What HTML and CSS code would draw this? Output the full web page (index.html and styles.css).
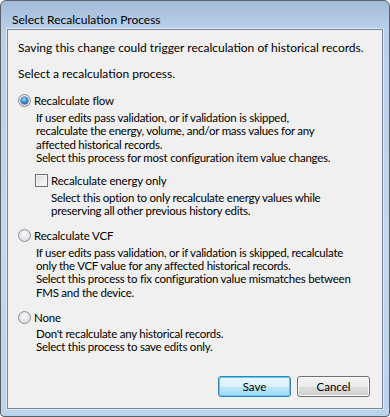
FILE: index.html
```html
<!DOCTYPE html>
<html lang="en">
<head>
    <meta charset="UTF-8">
    <title>Select Recalculation Process</title>
    <link rel="stylesheet" href="styles.css">
</head>
<body>
    <div class="window">
        <div class="titlebar">Select Recalculation Process</div>
        <div class="client">
            <p class="intro">Saving this change could trigger recalculation of historical records.</p>
            <p class="prompt">Select a recalculation process.</p>

            <div class="option">
                <div class="choice"><span class="radio checked"></span>Recalculate flow</div>
                <div class="desc">
                    If user edits pass validation, or if validation is skipped,<br>
                    recalculate the energy, volume, and/or mass values for any<br>
                    affected historical records.<br>
                    Select this process for most configuration item value changes.
                </div>
                <div class="sub-option">
                    <div class="choice"><span class="check"></span>Recalculate energy only</div>
                    <div class="desc sub-desc">
                        Select this option to only recalculate energy values while<br>
                        preserving all other previous history edits.
                    </div>
                </div>
            </div>

            <div class="option">
                <div class="choice"><span class="radio"></span>Recalculate VCF</div>
                <div class="desc">
                    If user edits pass validation, or if validation is skipped, recalculate<br>
                    only the VCF value for any affected historical records.<br>
                    Select this process to fix configuration value mismatches between<br>
                    FMS and the device.
                </div>
            </div>

            <div class="option last">
                <div class="choice"><span class="radio"></span>None</div>
                <div class="desc">
                    Don't recalculate any historical records.<br>
                    Select this process to save edits only.
                </div>
            </div>

            <div class="buttons">
                <button class="btn default">Save</button>
                <button class="btn">Cancel</button>
            </div>
        </div>
    </div>
</body>
</html>
```

FILE: styles.css
```css
body {
    margin: 0;
    font-family: Lato, "Open Sans", sans-serif;
    font-size: 12px;
    color: #000;
    background: #fff;
}
.window {
    box-sizing: border-box;
    width: 390px;
    height: 417px;
    display: flex;
    flex-direction: column;
    border: 1px solid #5b5f66;
    border-radius: 6px 6px 4px 4px;
    background: linear-gradient(to bottom, #a3bbd8 0px, #bad0e9 28px, #c3d7ed 60%, #bcd3ec 100%);
    padding: 0 6px 7px 6px;
}
.titlebar {
    box-sizing: border-box;
    height: 28px;
    padding: 12px 0 0 5px;
    line-height: 14px;
    white-space: nowrap;
}
.client {
    flex: 1;
    display: flex;
    flex-direction: column;
    background: #f0f0f0;
    border: 1px solid #7a8593;
    box-shadow: 0 0 0 1px #dde9f6;
    padding: 10px 12px 11px 10px;
    white-space: nowrap;
}
p {
    margin: 0;
    line-height: 15px;
}
.intro {
    margin-bottom: 11px;
}
.prompt {
    margin-bottom: 12px;
}
.option {
    margin-bottom: 10px;
}
.option.last {
    margin-top: 1px;
}
.choice {
    display: flex;
    align-items: center;
    height: 15px;
    line-height: 15px;
    font-size: 11.5px;
    letter-spacing: -0.15px;
}
.radio {
    box-sizing: border-box;
    width: 13px;
    height: 13px;
    margin-right: 3px;
    border-radius: 50%;
    border: 1px solid #8b9097;
    background: radial-gradient(circle at 50% 40%, #fbfbfb 0, #e2e3e5 60%, #cfd2d6 100%);
    position: relative;
}
.radio.checked::after {
    content: "";
    position: absolute;
    left: 2px;
    top: 2px;
    width: 7px;
    height: 7px;
    border-radius: 50%;
    background: radial-gradient(circle at 45% 35%, #9fe3ff 0, #3a8fd6 45%, #0d3f7d 100%);
    box-shadow: 0 0 0 0.5px #244e80;
}
.desc {
    padding-left: 18px;
    margin-top: 3px;
    line-height: 13.3px;
    font-size: 11.5px;
    letter-spacing: -0.25px;
}
.option.last .desc {
    margin-top: 2px;
}
.sub-option {
    margin-top: 9px;
    padding-left: 17px;
}
.check {
    box-sizing: border-box;
    width: 13px;
    height: 13px;
    margin-right: 3px;
    border: 1px solid #707070;
    background: linear-gradient(135deg, #dcdcdc 0, #fafafa 100%);
    box-shadow: inset 0 0 0 1px #f4f4f4;
}
.sub-desc {
    padding-left: 16px;
}
.buttons {
    margin-top: auto;
    display: flex;
    justify-content: flex-end;
    gap: 6px;
}
.btn {
    width: 73px;
    height: 21px;
    padding: 0;
    font-family: inherit;
    font-size: 11.5px;
    color: #000;
    border: 1px solid #707070;
    border-radius: 3px;
    background: linear-gradient(to bottom, #f2f2f2 0, #ebebeb 50%, #dddddd 50%, #cfcfcf 100%);
    box-shadow: inset 0 0 0 1px #fbfbfb;
}
.btn.default {
    border-color: #3c7fb1;
    background: linear-gradient(to bottom, #eaf6fd 0, #d9f0fc 50%, #bee6fd 50%, #a7d9f5 100%);
    box-shadow: inset 0 0 0 1px #48d4ff;
}
```
